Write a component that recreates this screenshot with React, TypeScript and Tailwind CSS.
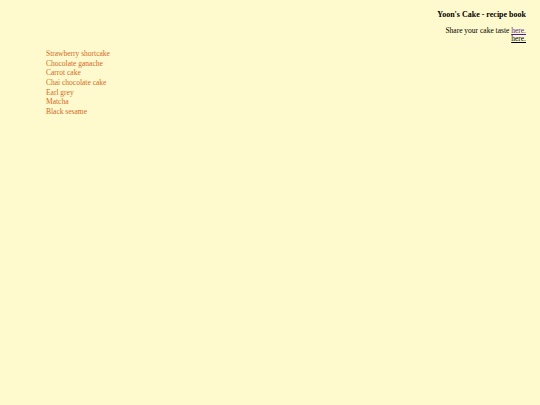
export default function App() {
  const items = [
    "Strawberry shortcake",
    "Chocolate ganache",
    "Carrot cake",
    "Chai chocolate cake",
    "Earl grey",
    "Matcha",
    "Black sesame",
  ];
  return (
    <div className="min-h-[405px] w-full bg-[#fffacd] text-black" style={{ fontFamily: '"Liberation Serif", serif' }}>
      <div className="flex flex-col items-end pr-[14px] pt-[10px] text-[7.5px]">
        <div className="text-[8px] font-bold leading-[10px]">Yoon's Cake - recipe book</div>
        <div className="mt-[7px] text-right leading-[8px]">
          Share your cake taste <a className="text-[#551a8b] underline">here.</a>
          <br />
          <a className="underline">here.</a>
        </div>
      </div>
      <ul className="mt-[6px] pl-[46px] text-[7.5px] leading-[9.65px] text-[#d2691e]">
        {items.map((t) => (
          <li key={t}>{t}</li>
        ))}
      </ul>
    </div>
  );
}
